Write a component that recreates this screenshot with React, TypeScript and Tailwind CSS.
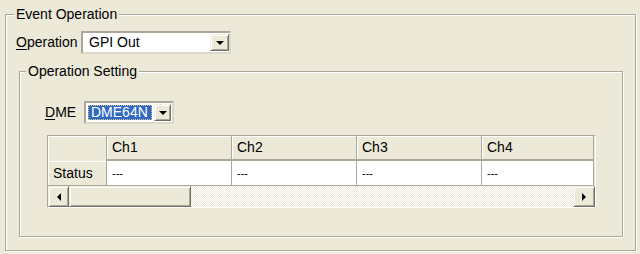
import React from 'react';

const raised =
  'bg-[#ece9d8] border border-t-[#f1efe2] border-l-[#f1efe2] border-r-[#716f64] border-b-[#716f64] shadow-[inset_1px_1px_0_#fff,inset_-1px_-1px_0_#aca899]';

const DownArrow = () => (
  <div className="w-0 h-0 border-l-[4px] border-r-[4px] border-t-[4px] border-l-transparent border-r-transparent border-t-black" />
);

const ComboButton: React.FC<{ width: string }> = ({ width }) => (
  <div className={`${width} shrink-0 flex items-center justify-center ${raised}`}>
    <DownArrow />
  </div>
);

const ScrollButton: React.FC<{ dir: 'left' | 'right'; width: string }> = ({ dir, width }) => (
  <div className={`${width} shrink-0 flex items-center justify-center ${raised}`}>
    {dir === 'left' ? (
      <div className="w-0 h-0 border-t-[4px] border-b-[4px] border-r-[4px] border-t-transparent border-b-transparent border-r-black" />
    ) : (
      <div className="w-0 h-0 border-t-[4px] border-b-[4px] border-l-[4px] border-t-transparent border-b-transparent border-l-black" />
    )}
  </div>
);

// last column runs past the visible area, like the original grid
const channels = [
  { name: 'Ch1', w: 'w-[125px]' },
  { name: 'Ch2', w: 'w-[125px]' },
  { name: 'Ch3', w: 'w-[125px]' },
  { name: 'Ch4', w: 'w-[112px]' },
];

export default function App() {
  return (
    <div className="w-[640px] h-[254px] bg-[#ece9d8] pt-[6px] pl-[5px] text-[14px] text-black font-['Liberation_Sans',Arial,sans-serif] overflow-hidden">
      {/* Event Operation */}
      <fieldset className="w-[631px] h-[245px] border border-[#aca899] shadow-[inset_1px_1px_0_#fff,1px_1px_0_#fff] pl-[10px] pr-[12px] pt-[9px]">
        <legend className="-ml-[2px] px-[2px] leading-[16px] bg-[#ece9d8]">Event Operation</legend>

        <div className="flex items-center h-[23px]">
          <span className="w-[65px] shrink-0">
            <span className="underline underline-offset-2">O</span>peration
          </span>
          <div className="w-[150px] h-[23px] flex bg-white border-2 border-t-[#aca899] border-l-[#aca899] border-r-[#dcd9cb] border-b-[#dcd9cb] py-[1px]">
            <div className="flex-1 flex items-center pl-[6px]">GPI Out</div>
            <ComboButton width="w-[19px]" />
          </div>
        </div>

        {/* Operation Setting */}
        <fieldset className="ml-[3px] mt-[9px] w-[604px] h-[174px] border border-[#aca899] shadow-[inset_1px_1px_0_#fff,1px_1px_0_#fff] pl-[25px] pt-[22px]">
          <legend className="-ml-[19px] px-[2px] leading-[16px] bg-[#ece9d8]">Operation Setting</legend>

          <div className="flex items-center h-[23px]">
            <span className="w-[39px] shrink-0">
              <span className="underline underline-offset-2">D</span>ME
            </span>
            <div className="w-[90px] h-[23px] flex bg-white border-2 border-t-[#aca899] border-l-[#aca899] border-r-[#dcd9cb] border-b-[#dcd9cb] p-[1px] gap-[2px]">
              <div className="flex-1 my-[1px] ml-[1px] flex items-center pl-[2px] bg-[#316ac5] text-white border border-dotted border-[#d8c58a]">
                DME64N
              </div>
              <ComboButton width="w-[17px]" />
            </div>
          </div>

          {/* Grid */}
          <div className="ml-[2px] mt-[11px] w-[549px] bg-[#ece9d8] border border-t-[#aca899] border-l-[#aca899] border-r-white border-b-white overflow-hidden">
            <div className="flex h-[25px]">
              <div className="w-[59px] shrink-0 border-r border-[#aca899] shadow-[inset_1px_1px_0_#fff]" />
              {channels.map(ch => (
                <div
                  key={ch.name}
                  className={`${ch.w} shrink-0 flex items-center pl-[5px] border-r border-r-[#aca899] border-b-2 border-b-[#aca899] shadow-[inset_1px_1px_0_#fff]`}
                >
                  {ch.name}
                </div>
              ))}
            </div>
            <div className="flex h-[25px]">
              <div className="w-[59px] shrink-0 flex items-center pl-[5px] border-r border-b border-[#aca899] shadow-[inset_1px_1px_0_#fff]">
                Status
              </div>
              {channels.map(ch => (
                <div
                  key={ch.name}
                  className={`${ch.w} shrink-0 flex items-center pl-[5px] bg-white border-r border-b border-[#aca899] text-[11px]`}
                >
                  ---
                </div>
              ))}
            </div>
            <div className="flex h-[21px]">
              <ScrollButton dir="left" width="w-[21px]" />
              <div className={`w-[122px] shrink-0 ${raised}`} />
              <div className="flex-1 bg-[repeating-conic-gradient(#fff_0_25%,#ece9d8_0_50%)] bg-[length:2px_2px]" />
              <ScrollButton dir="right" width="w-[22px]" />
            </div>
          </div>
        </fieldset>
      </fieldset>
    </div>
  );
}
